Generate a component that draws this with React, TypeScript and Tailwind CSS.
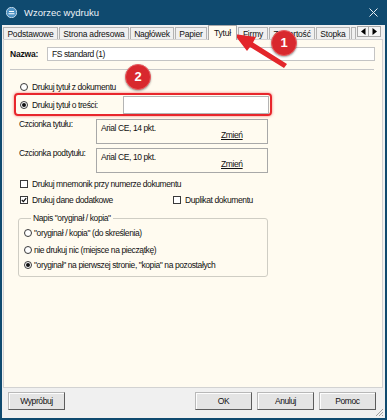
import React from "react";

const tabs = [
	{ label: "Podstawowe", w: "w-[55px]" },
	{ label: "Strona adresowa", w: "w-[70px]" },
	{ label: "Nagłówek", w: "w-[44px]" },
	{ label: "Papier", w: "w-[32px]" },
	{ label: "Tytuł", w: "w-[29px]", active: true },
	{ label: "Firmy", w: "w-[30px]" },
	{ label: "Zawartość", w: "w-[46px]" },
	{ label: "Stopka", w: "w-[34px]" },
	{ label: "", w: "w-[5px]" },
];

const Radio = ({ checked }: { checked?: boolean }) => (
	<span className="w-[8px] h-[8px] rounded-full border border-[#3a3a3a] bg-white flex items-center justify-center shrink-0">
		{checked && <span className="w-[4px] h-[4px] rounded-full bg-[#111]" />}
	</span>
);

const Checkbox = ({ checked }: { checked?: boolean }) => (
	<span className="w-[8px] h-[8px] border border-[#3a3a3a] bg-white flex items-center justify-center shrink-0">
		{checked && (
			<svg width="6" height="6" viewBox="0 0 6 6">
				<path d="M0.8 3 L2.4 4.6 L5.2 1.2" fill="none" stroke="#111" strokeWidth="1.3" />
			</svg>
		)}
	</span>
);

const Button = ({ children }: { children: React.ReactNode }) => (
	<button className="w-[57px] h-[18px] bg-[#e4e4e4] border border-[#b8b8b8] border-r-[#5c5c5c] border-b-[#5c5c5c] shadow-[inset_1px_1px_0_#fdfdfd] flex items-center justify-center text-[#111]">
		{children}
	</button>
);

const FontBox = ({ label, value }: { label: string; value: string }) => (
	<div className="flex ml-[9px] h-[25px]">
		<span className="w-[77px]">{label}</span>
		<div className="w-[172px] h-[25px] border border-[#a8a8a8] flex pl-[4px] pt-[3px]">
			<span className="w-[120px]">{value}</span>
			<span className="mt-[7px] underline">Zmień</span>
		</div>
	</div>
);

const App = () => {
	return (
		<div className="w-[387px] h-[420px] bg-[#0f4a6f] flex flex-col px-[2px] pb-[2px] relative font-['Liberation_Sans',Arial,sans-serif] text-[8.5px] leading-[10px] tracking-[-0.4px] text-[#111]">
			{/* title bar */}
			<div className="h-[25px] flex items-center pl-[4px] pr-[7px] text-[#eef3f7] text-[9.5px] tracking-normal">
				<svg width="11" height="11" viewBox="0 0 11 11" className="mr-[7px]">
					<circle cx="5.5" cy="5.5" r="5.2" fill="#4f93c4" stroke="#dce9f3" strokeWidth="0.8" />
					<path d="M2.5 6.8 H8.5 M3 4.5 H8" stroke="#fff" strokeWidth="1.1" />
				</svg>
				<span>Wzorzec wydruku</span>
				<svg width="9" height="9" viewBox="0 0 9 9" className="ml-auto">
					<path d="M0.5 0.5 L8.5 8.5 M8.5 0.5 L0.5 8.5" stroke="#e6edf2" strokeWidth="1" />
				</svg>
			</div>

			<div className="flex-1 bg-[#f0f0f0] flex flex-col">
				{/* tabs */}
				<div className="h-[14px] flex items-end pl-[1px] gap-[1px] tracking-[-0.2px]">
					{tabs.map((t, i) =>
						t.active ? (
							<div
								key={i}
								className={`${t.w} h-[15px] -mb-[1px] relative z-10 bg-[#fffbf0] border border-[#a9a9a9] border-b-0 flex items-center justify-center`}
							>
								{t.label}
							</div>
						) : (
							<div
								key={i}
								className={`${t.w} h-[12px] bg-[#f0f0f0] border border-[#b3b3b3] border-b-0 flex items-center justify-center overflow-hidden whitespace-nowrap`}
							>
								{t.label}
							</div>
						),
					)}
					<div className="flex mb-[2px]">
						<span className="w-[12px] h-[11px] border border-[#a9a9a9] bg-[#f5f5f5] flex items-center justify-center">
							<svg width="5" height="7" viewBox="0 0 5 7">
								<path d="M4.5 0 V7 L0 3.5 Z" fill="#000" />
							</svg>
						</span>
						<span className="w-[12px] h-[11px] border border-[#a9a9a9] border-l-0 bg-[#f5f5f5] flex items-center justify-center">
							<svg width="5" height="7" viewBox="0 0 5 7">
								<path d="M0.5 0 V7 L5 3.5 Z" fill="#000" />
							</svg>
						</span>
					</div>
				</div>

				{/* panel */}
				<div className="flex-1 ml-[1px] mr-[2px] bg-[#fffbf0] border border-[#d2d2d2] flex flex-col pl-[6px]">
					<div className="mt-[7px] flex items-center h-[14px]">
						<span className="w-[37px] font-bold tracking-[-0.2px]">Nazwa:</span>
						<div className="w-[328px] h-[14px] border border-[#c4c4c4] bg-white pl-[4px] flex items-center">
							FS standard (1)
						</div>
					</div>

					<div className="mt-[8px] w-[364px] h-[1px] bg-[#c8c8c8]" />

					<div className="mt-[12px] ml-[10px] flex items-center gap-[4px] h-[10px]">
						<Radio />
						<span>Drukuj tytuł z dokumentu</span>
					</div>

					<div className="mt-[1px] ml-[4px] w-[258px] h-[23px] border-2 border-[#e8262c] rounded-[4px] shadow-[0_0_3px_rgba(230,40,40,0.6)] flex items-center pl-[4px] pr-[1px]">
						<Radio checked />
						<span className="ml-[4px]">Drukuj tytuł o treści:</span>
						<div className="ml-auto w-[146px] h-[18px] border border-[#b4b4b4] bg-white" />
					</div>

					<div className="mt-[3px]">
						<FontBox label="Czcionka tytułu:" value="Arial CE, 14 pkt." />
					</div>
					<div className="mt-[4px]">
						<FontBox label="Czcionka podtytułu:" value="Arial CE, 10 pkt." />
					</div>

					<div className="mt-[6px] ml-[10px] flex items-center gap-[4px] h-[10px]">
						<Checkbox />
						<span>Drukuj mnemonik przy numerze dokumentu</span>
					</div>
					<div className="mt-[6px] ml-[10px] flex items-center h-[10px]">
						<div className="w-[153px] flex items-center gap-[4px]">
							<Checkbox checked />
							<span>Drukuj dane dodatkowe</span>
						</div>
						<div className="flex items-center gap-[4px]">
							<Checkbox />
							<span>Duplikat dokumentu</span>
						</div>
					</div>

					<fieldset className="mt-[8px] ml-[8px] w-[250px] h-[64px] border border-[#cfcdc4] rounded-[3px] pl-[5px] flex flex-col">
						<legend className="ml-[7px] px-[2px]">Napis "oryginał / kopia"</legend>
						<div className="mt-[5px] flex items-center gap-[2px] h-[10px]">
							<Radio />
							<span>"oryginał / kopia" (do skreślenia)</span>
						</div>
						<div className="mt-[7px] flex items-center gap-[2px] h-[10px]">
							<Radio />
							<span>nie drukuj nic (miejsce na pieczątkę)</span>
						</div>
						<div className="mt-[5px] flex items-center gap-[2px] h-[10px]">
							<Radio checked />
							<span>"oryginał" na pierwszej stronie, "kopia" na pozostałych</span>
						</div>
					</fieldset>
				</div>

				{/* buttons */}
				<div className="h-[30px] flex items-start pt-[4px] pl-[6px] pr-[9px] relative">
					<Button>Wypróbuj</Button>
					<div className="ml-auto flex gap-[5px]">
						<Button>OK</Button>
						<Button>Anuluj</Button>
						<Button>Pomoc</Button>
					</div>
					<svg width="9" height="9" viewBox="0 0 9 9" className="absolute right-[1px] bottom-[1px]">
						<path d="M8 1 L1 8 M8 4 L4 8 M8 7 L7 8" stroke="#a0a0a0" strokeWidth="1" />
					</svg>
				</div>
			</div>

			{/* annotations */}
			<svg width="387" height="420" viewBox="0 0 387 420" className="absolute inset-0 pointer-events-none">
				<path d="M287 64 L253 42.5 L256 37 L234 34 L247 51 L250 47 L284 68 Z" fill="#e3262b" />
			</svg>
			<div className="absolute left-[271px] top-[30px] w-[26px] h-[26px] rounded-full bg-[#d8282e] border border-[#e85a5e] shadow-[0_1px_2px_rgba(0,0,0,0.35)] flex items-center justify-center text-white font-bold text-[13px] tracking-normal">
				1
			</div>
			<div className="absolute left-[125px] top-[64px] w-[26px] h-[26px] rounded-full bg-[#d8282e] border border-[#e85a5e] shadow-[0_1px_2px_rgba(0,0,0,0.35)] flex items-center justify-center text-white font-bold text-[13px] tracking-normal">
				2
			</div>
		</div>
	);
};

export default App;
